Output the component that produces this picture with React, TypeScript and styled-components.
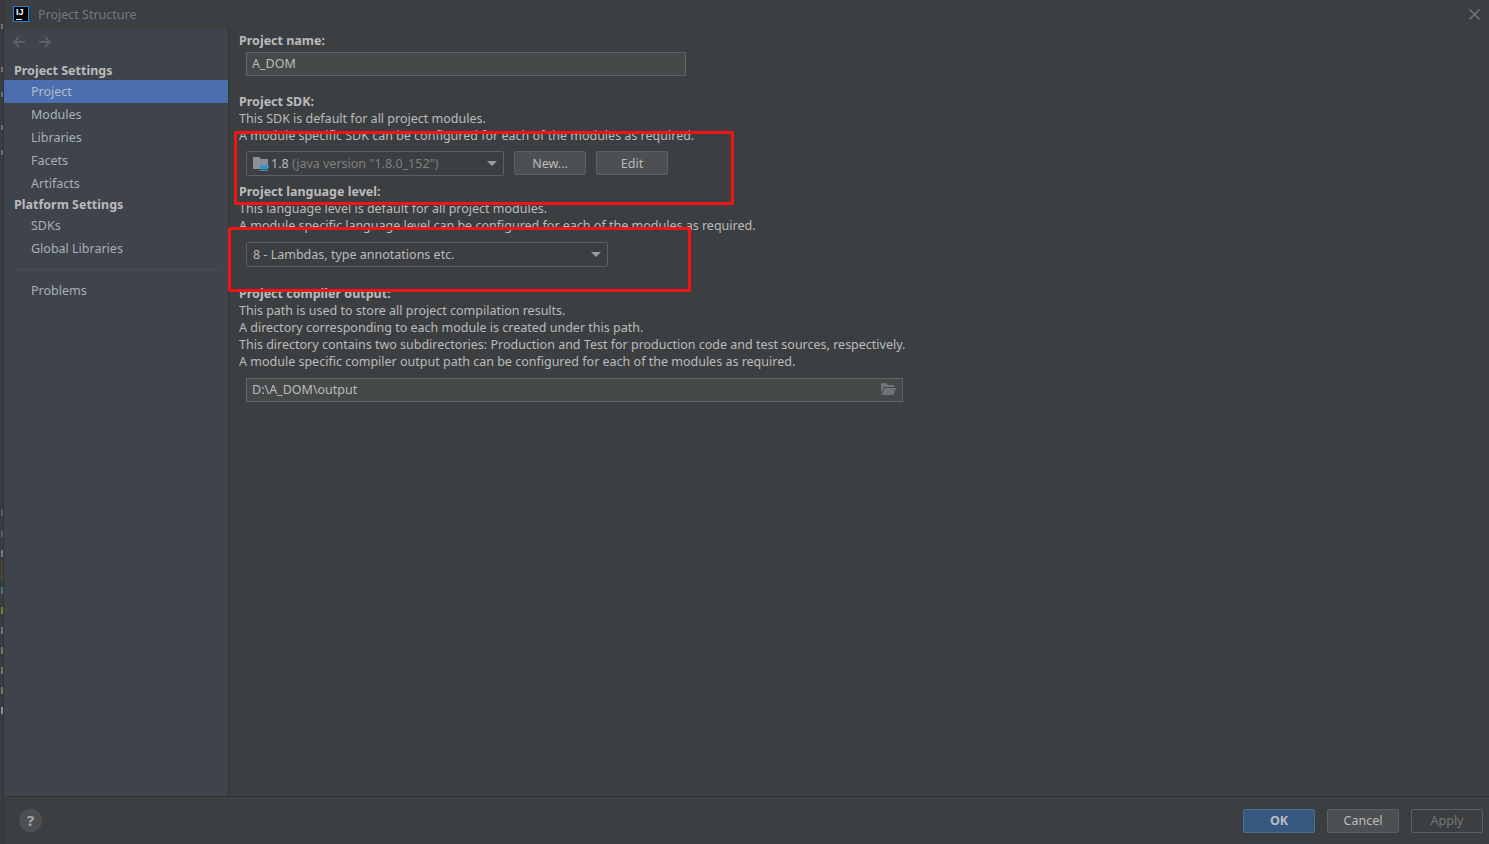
import styled, { createGlobalStyle } from "styled-components";

const GlobalStyle = createGlobalStyle`
  html, body {
    margin: 0;
    padding: 0;
    background: #3c3f41;
  }
  body {
    font-family: "Noto Sans", "Open Sans", sans-serif;
    font-size: 12.5px;
    color: #bbbbbb;
  }
`;

const Page = styled.div`
  width: 1489px;
  height: 844px;
  display: flex;
  position: relative;
  overflow: hidden;
`;

const BehindStrip = styled.div`
  width: 4px;
  box-sizing: border-box;
  background: #3a3d3f;
  border-right: 1px solid #323436;
  flex-shrink: 0;
  display: flex;
  flex-direction: column;
  overflow: hidden;
`;

const Tick = styled.div<{ $top: number; $color: string; $height: number }>`
  width: 2px;
  height: ${(p) => p.$height}px;
  margin: ${(p) => p.$top}px 0 0 1px;
  background: ${(p) => p.$color};
  flex-shrink: 0;
`;

const Dialog = styled.div`
  flex: 1;
  display: flex;
  flex-direction: column;
  background: #3c3f41;
  min-width: 0;
`;

const TitleBar = styled.div`
  height: 28px;
  display: flex;
  align-items: center;
  padding: 0 9px;
  gap: 9px;
  color: #787878;
  flex-shrink: 0;
`;

const TitleText = styled.span`
  flex: 1;
`;

const Logo = styled.div`
  width: 16px;
  height: 16px;
  box-sizing: border-box;
  background: #000;
  border: 1px solid #1e88e5;
  color: #fff;
  font: 700 9px/9px "Liberation Sans", sans-serif;
  padding: 1px 0 0 2px;
  position: relative;
  &::after {
    content: "";
    position: absolute;
    left: 2px;
    bottom: 1px;
    width: 6px;
    height: 1px;
    background: #fff;
  }
`;

const Body = styled.div`
  flex: 1;
  display: flex;
  min-height: 0;
`;

const Sidebar = styled.aside`
  width: 224px;
  flex-shrink: 0;
  background: #3e434c;
  border-right: 1px solid #323232;
  display: flex;
  flex-direction: column;
`;

const NavRow = styled.div`
  height: 28px;
  display: flex;
  align-items: center;
  gap: 12px;
  padding-left: 8px;
  margin-bottom: 4px;
  color: #5b5f63;
`;

const GroupTitle = styled.div<{ $top?: number }>`
  height: 20px;
  line-height: 22px;
  padding-left: 10px;
  margin-top: ${(p) => p.$top ?? 0}px;
  font-weight: 700;
  color: #bbbbbb;
`;

const NavItem = styled.div<{ $active?: boolean }>`
  height: 23px;
  line-height: 23px;
  padding-left: 27px;
  color: ${(p) => (p.$active ? "#b4bcc8" : "#a9b0b8")};
  background: ${(p) => (p.$active ? "#4b6eaf" : "transparent")};
`;

const NavDivider = styled.div`
  height: 1px;
  margin: 9px 8px 9px 9px;
  background: #4a4d50;
`;

const Content = styled.main`
  flex: 1;
  padding: 4px 10px 0;
  display: flex;
  flex-direction: column;
`;

const Label = styled.div<{ $top?: number }>`
  height: 17px;
  line-height: 17px;
  font-weight: 700;
  margin-top: ${(p) => p.$top ?? 0}px;
`;

const Line = styled.div`
  height: 17px;
  line-height: 17px;
`;

const Field = styled.div<{ $width: number; $top: number }>`
  width: ${(p) => p.$width}px;
  height: 24px;
  margin: ${(p) => p.$top}px 0 0 7px;
  box-sizing: border-box;
  background: #45494a;
  border: 1px solid #646464;
  padding: 0 6px 2px 5px;
  display: flex;
  align-items: center;
  justify-content: space-between;
  color: #bbbbbb;
`;

const ComboRow = styled.div<{ $top: number }>`
  display: flex;
  align-items: flex-start;
  gap: 10px;
  margin: ${(p) => p.$top}px 0 0 7px;
`;

const Combo = styled.div<{ $width: number }>`
  width: ${(p) => p.$width}px;
  height: 25px;
  box-sizing: border-box;
  background: #3c3f41;
  border: 1px solid #5e6060;
  border-radius: 2px;
  padding: 0 6px;
  display: flex;
  align-items: center;
  gap: 2px;
  color: #bbbbbb;
`;

const ComboText = styled.span`
  flex: 1;
`;

const Muted = styled.span`
  color: #808080;
`;

const Caret = styled.div`
  width: 0;
  height: 0;
  border-left: 5px solid transparent;
  border-right: 5px solid transparent;
  border-top: 5px solid #9a9d9f;
`;

const Button = styled.div<{ $kind?: "primary" | "disabled" }>`
  width: 72px;
  height: 24px;
  box-sizing: border-box;
  display: flex;
  align-items: center;
  justify-content: center;
  border-radius: 2px;
  border: 1px solid ${(p) => (p.$kind === "primary" ? "#4c708c" : "#5e6060")};
  background: ${(p) =>
    p.$kind === "primary" ? "#365880" : p.$kind === "disabled" ? "#3c3f41" : "#4c5052"};
  color: ${(p) => (p.$kind === "disabled" ? "#777777" : "#bbbbbb")};
  font-weight: ${(p) => (p.$kind === "primary" ? 700 : 400)};
`;

const Footer = styled.footer`
  height: 48px;
  flex-shrink: 0;
  border-top: 1px solid #323232;
  display: flex;
  align-items: center;
  justify-content: space-between;
  padding: 0 6px 0 15px;
  box-sizing: border-box;
`;

const Help = styled.div`
  width: 23px;
  height: 23px;
  box-sizing: border-box;
  padding-bottom: 1px;
  border-radius: 50%;
  background: #4c5052;
  color: #a8a8a8;
  font-weight: 700;
  font-size: 15px;
  display: flex;
  align-items: center;
  justify-content: center;
`;

const FooterButtons = styled.div`
  display: flex;
  gap: 12px;
  ${Button} {
    padding-bottom: 1px;
  }
`;

const RedBox = styled.div<{ $x: number; $y: number; $w: number; $h: number }>`
  position: absolute;
  left: ${(p) => p.$x}px;
  top: ${(p) => p.$y}px;
  width: ${(p) => p.$w}px;
  height: ${(p) => p.$h}px;
  box-sizing: border-box;
  border: 3px solid #f01414;
  border-radius: 2px;
`;

const Arrow = ({ flip }: { flip?: boolean }) => (
  <svg
    width="14"
    height="14"
    viewBox="0 0 14 14"
    fill="none"
    stroke="currentColor"
    strokeWidth="2"
    style={flip ? { transform: "scaleX(-1)" } : undefined}
  >
    <path d="M13 7H2M7 2 2 7l5 5" />
  </svg>
);

const SdkIcon = () => (
  <svg width="16" height="15" viewBox="0 0 16 15">
    <path d="M0 1h6l2 2h7v10H0z" fill="#8a9299" />
    <path d="M7 9h7v2.500a2 2 0 0 1-2 2H9a2 2 0 0 1-2-2z" fill="#3592c4" />
    <path d="M14 9.500h2v2h-2z" fill="#3592c4" />
    <path d="M6 14h9v1H6z" fill="#3592c4" />
  </svg>
);

const FolderIcon = () => (
  <svg width="15" height="12" viewBox="0 0 15 12">
    <path d="M0 0h5l2 2h6v2H3L0 10z" fill="#6e7478" />
    <path d="M3.500 5H15l-2.500 7H0.500z" fill="#6e7478" />
  </svg>
);

const CloseIcon = () => (
  <svg width="11" height="11" viewBox="0 0 11 11" stroke="#7d8082" strokeWidth="1.100">
    <path d="M.5.5l10 10M10.500.5l-10 10" />
  </svg>
);

// bits of the editor window that stick out on the left of the dialog
const ticks = [
  { top: 24, height: 5, color: "#6f7274" },
  { top: 38, height: 5, color: "#6f7274" },
  { top: 20, height: 5, color: "#65727e" },
  { top: 28, height: 5, color: "#6f7274" },
  { top: 20, height: 5, color: "#6f7274" },
  { top: 355, height: 6, color: "#4a6378" },
  { top: 15, height: 6, color: "#4a6378" },
  { top: 13, height: 7, color: "#6f7d88" },
  { top: 3, height: 20, color: "#4a4538" },
  { top: 7, height: 7, color: "#4f7488" },
  { top: 13, height: 7, color: "#72802f" },
  { top: 13, height: 7, color: "#747476" },
  { top: 13, height: 7, color: "#7d746c" },
  { top: 13, height: 7, color: "#7d746c" },
  { top: 13, height: 7, color: "#7d746c" },
  { top: 13, height: 7, color: "#8c8c8c" },
];

export default function App() {
  return (
    <Page>
      <GlobalStyle />
      <BehindStrip>
        {ticks.map((t, i) => (
          <Tick key={i} $top={t.top} $height={t.height} $color={t.color} />
        ))}
      </BehindStrip>
      <Dialog>
        <TitleBar>
          <Logo>IJ</Logo>
          <TitleText>Project Structure</TitleText>
          <CloseIcon />
        </TitleBar>
        <Body>
          <Sidebar>
            <NavRow>
              <Arrow />
              <Arrow flip />
            </NavRow>
            <GroupTitle>Project Settings</GroupTitle>
            <NavItem $active>Project</NavItem>
            <NavItem>Modules</NavItem>
            <NavItem>Libraries</NavItem>
            <NavItem>Facets</NavItem>
            <NavItem>Artifacts</NavItem>
            <GroupTitle $top={-1}>Platform Settings</GroupTitle>
            <NavItem>SDKs</NavItem>
            <NavItem>Global Libraries</NavItem>
            <NavDivider />
            <NavItem>Problems</NavItem>
          </Sidebar>
          <Content>
            <Label>Project name:</Label>
            <Field $width={440} $top={3}>A_DOM</Field>
            <Label $top={17}>Project SDK:</Label>
            <Line>This SDK is default for all project modules.</Line>
            <Line>A module specific SDK can be configured for each of the modules as required.</Line>
            <ComboRow $top={7}>
              <Combo $width={258}>
                <SdkIcon />
                <ComboText>
                  1.8 <Muted>(java version "1.8.0_152")</Muted>
                </ComboText>
                <Caret />
              </Combo>
              <Button>New...</Button>
              <Button>Edit</Button>
            </ComboRow>
            <Label $top={7}>Project language level:</Label>
            <Line>This language level is default for all project modules.</Line>
            <Line>A module specific language level can be configured for each of the modules as required.</Line>
            <ComboRow $top={8}>
              <Combo $width={362}>
                <ComboText>8 - Lambdas, type annotations etc.</ComboText>
                <Caret />
              </Combo>
            </ComboRow>
            <Label $top={18}>Project compiler output:</Label>
            <Line>This path is used to store all project compilation results.</Line>
            <Line>A directory corresponding to each module is created under this path.</Line>
            <Line>This directory contains two subdirectories: Production and Test for production code and test sources, respectively.</Line>
            <Line>A module specific compiler output path can be configured for each of the modules as required.</Line>
            <Field $width={657} $top={8}>
              D:\A_DOM\output
              <FolderIcon />
            </Field>
          </Content>
        </Body>
        <Footer>
          <Help>?</Help>
          <FooterButtons>
            <Button $kind="primary">OK</Button>
            <Button>Cancel</Button>
            <Button $kind="disabled">Apply</Button>
          </FooterButtons>
        </Footer>
      </Dialog>
      <RedBox $x={234} $y={131} $w={500} $h={74} />
      <RedBox $x={228} $y={227} $w={463} $h={65} />
    </Page>
  );
}
